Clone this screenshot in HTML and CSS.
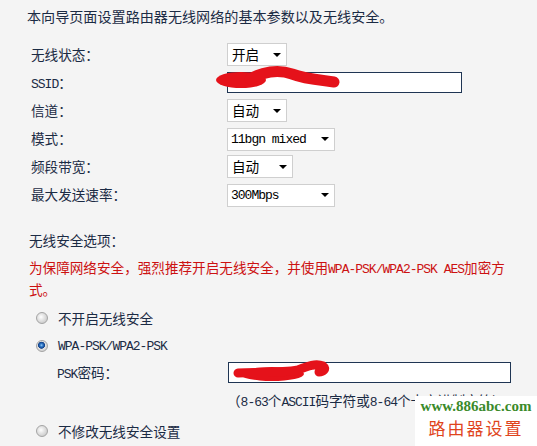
FILE: index.html
```html
<!DOCTYPE html>
<html lang="zh-CN">
  <head>
    <meta charset="UTF-8" />
    <meta name="viewport" content="width=device-width, initial-scale=1.0" />
    <title>无线设置</title>
    <link rel="stylesheet" href="styles.css">
  </head>
  <body>
    <div class="page">
      <p class="intro">本向导页面设置路由器无线网络的基本参数以及无线安全。</p>

      <div class="form">
        <div class="row">
          <span class="label">无线状态：</span>
          <span class="sel"><select class="w60"><option>开启</option></select></span>
        </div>
        <div class="row">
          <span class="label"><span class="en">SSID</span>：</span>
          <input class="text ssid" type="text" value="" />
        </div>
        <div class="row">
          <span class="label">信道：</span>
          <span class="sel"><select class="w60"><option>自动</option></select></span>
        </div>
        <div class="row">
          <span class="label">模式：</span>
          <span class="sel"><select class="w108 en"><option>11bgn mixed</option></select></span>
        </div>
        <div class="row">
          <span class="label">频段带宽：</span>
          <span class="sel"><select class="w66"><option>自动</option></select></span>
        </div>
        <div class="row">
          <span class="label">最大发送速率：</span>
          <span class="sel"><select class="w108 en"><option>300Mbps</option></select></span>
        </div>
      </div>

      <div class="security">
        <p class="title">无线安全选项：</p>
        <p class="warn">为保障网络安全，强烈推荐开启无线安全，并使用<span class="en">WPA-PSK/WPA2-PSK AES</span>加密方式。</p>

        <label class="radio-row first">
          <input type="radio" name="sec" />
          <span>不开启无线安全</span>
        </label>
        <label class="radio-row">
          <input type="radio" name="sec" checked />
          <span class="en">WPA-PSK/WPA2-PSK</span>
        </label>
        <div class="psk">
          <span class="psk-label"><span class="en">PSK</span>密码：</span>
          <input class="text psk-input" type="text" value="" />
        </div>
        <div class="hint">（<span class="en">8-63</span>个<span class="en">ASCII</span>码字符或<span class="en">8-64</span>个十六进制字符）</div>
        <label class="radio-row last">
          <input type="radio" name="sec" />
          <span>不修改无线安全设置</span>
        </label>
      </div>

      <!-- red marker over the hidden values -->
      <svg class="marker" width="537" height="446" viewBox="0 0 537 446">
        <ellipse cx="241" cy="80" rx="25" ry="8" fill="#e5121a" />
        <path d="M250 79 C 262 72, 278 69, 292 74 C 305 79, 320 80, 334 82" stroke="#e5121a" stroke-width="11" stroke-linecap="round" fill="none" />
        <ellipse cx="272" cy="374" rx="32" ry="7" fill="#e5121a" />
        <path d="M238 373 C 262 372, 282 373, 298 370 C 308 366, 316 363, 323 366 C 327 369, 323 372, 319 372" stroke="#e5121a" stroke-width="9" stroke-linecap="round" fill="none" />
      </svg>

      <div class="stamp">
        <div class="stamp-url">www.886abc.com</div>
        <div class="stamp-name">路由器设置</div>
      </div>
    </div>
  </body>
</html>
```

FILE: styles.css
```css
body {
  margin: 0;
  background-color: #f4f4f4;
  font-family: "Noto Sans CJK SC", sans-serif;
  font-size: 13.6px;
  color: #1b2b44;
}

.page {
  position: relative;
  width: 537px;
  height: 446px;
  overflow: hidden;
}

.en {
  font-family: "Liberation Mono", "Noto Sans CJK SC", monospace;
  font-size: 13px;
  letter-spacing: -1px;
  line-height: 1;
}

p {
  margin: 0;
}

.intro {
  margin: 6px 0 0 27px;
  font-size: 14.1px;
  line-height: 20px;
}

.form {
  margin-top: 14px;
  padding-left: 31px;
}

.row {
  display: flex;
  align-items: center;
  height: 28px;
}

.label {
  width: 196px;
}

.sel {
  position: relative;
  display: inline-block;
  height: 23px;
}

.sel::after {
  content: "";
  position: absolute;
  right: 6px;
  top: 10px;
  border-left: 4px solid transparent;
  border-right: 4px solid transparent;
  border-top: 4px solid #000;
}

.sel select {
  -webkit-appearance: none;
  appearance: none;
  height: 23px;
  margin: 0;
  padding: 0 0 0 4px;
  border: 1px solid #cfcfcf;
  border-radius: 0;
  background-color: #fff;
  color: #000;
  font-family: "Noto Sans CJK SC", sans-serif;
  font-size: 13.6px;
}

.sel select.en {
  font-family: "Liberation Mono", monospace;
  font-size: 13px;
  letter-spacing: -1px;
  padding-left: 3px;
}

.w60 { width: 60px; }
.w66 { width: 66px; }
.w108 { width: 108px; }

.text {
  box-sizing: border-box;
  height: 21px;
  margin: 0;
  padding: 0 4px;
  border: 1px solid #1f3553;
  background-color: #fff;
  font-family: "Liberation Mono", monospace;
  font-size: 13px;
}

.ssid {
  width: 235px;
}

.security {
  margin-top: 21px;
  padding-left: 29px;
}

.title {
  line-height: 22px;
}

.warn {
  margin-top: 5px;
  width: 482px;
  line-height: 22px;
  color: #cc1111;
}

.radio-row {
  display: flex;
  align-items: center;
  height: 28px;
}

.radio-row.first {
  margin-top: 4px;
}

.radio-row.last {
  margin-top: 5px;
}

.radio-row input {
  -webkit-appearance: none;
  appearance: none;
  width: 12px;
  height: 12px;
  margin: 0 10px 0 7px;
  border: 1px solid #a4a4a4;
  border-radius: 50%;
  background: radial-gradient(circle at 40% 40%, #ffffff 0, #e6e6e6 3px, #c9c9c9 7px);
}

.radio-row input:checked {
  background: radial-gradient(circle at 45% 42%, #9cccf4 0, #2f78c8 1.5px, #123f86 3.2px, #e4e4e4 3.8px, #c6c6c6 7px);
}

.psk {
  display: flex;
  align-items: center;
  height: 24px;
  padding-left: 28px;
}

.psk-label {
  width: 171px;
}

.psk-input {
  width: 283px;
}

.hint {
  margin-top: 4px;
  padding-left: 198px;
  line-height: 24px;
  white-space: nowrap;
}

.marker {
  position: absolute;
  top: 0;
  left: 0;
  pointer-events: none;
}

.stamp {
  position: absolute;
  right: 0;
  bottom: 0;
  width: 122px;
  height: 50px;
  background-color: #fff;
  text-align: center;
}

.stamp-url {
  margin-top: 1px;
  font-family: "Liberation Serif", serif;
  font-weight: bold;
  font-size: 15px;
  line-height: 18px;
  color: #3a8a2a;
}

.stamp-name {
  font-size: 17px;
  line-height: 26px;
  letter-spacing: 2px;
  color: #e0441c;
}
```
